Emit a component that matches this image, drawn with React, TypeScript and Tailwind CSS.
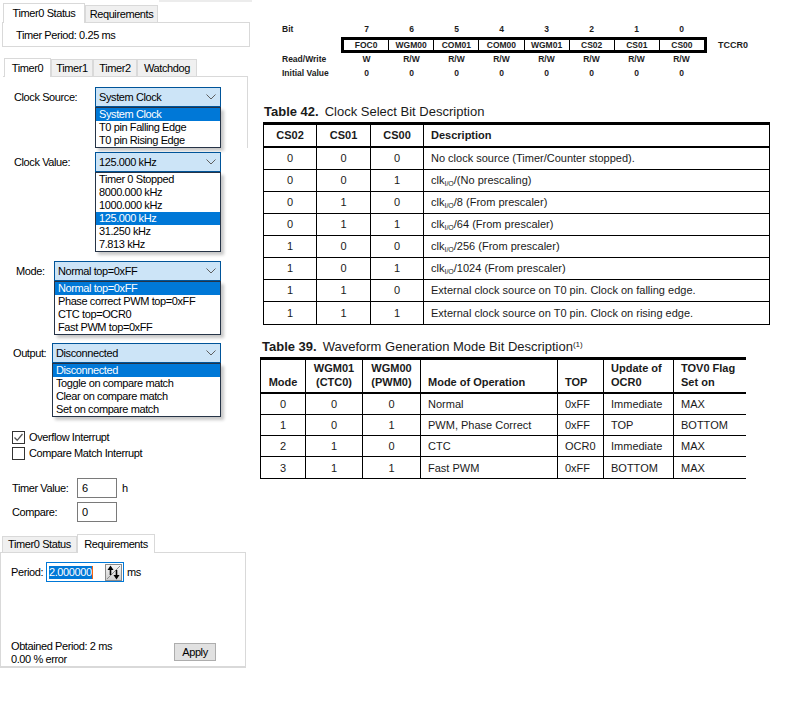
import React from 'react';

// Composite: WinForms timer-config panel on the left, datasheet excerpts on the right.

type TabProps = { label: string; active?: boolean; className: string };

function Tab({ label, active, className }: TabProps) {
  if (active) {
    return (
      <div
        className={`relative z-10 -mb-px flex items-center justify-center border border-b-0 border-[#d9d9d9] bg-white ${className}`}
      >
        {label}
      </div>
    );
  }
  return (
    <div
      className={`flex items-center justify-center border border-b-0 border-[#d9d9d9] bg-[#f0f0f0] ${className}`}
    >
      {label}
    </div>
  );
}

function Chevron() {
  return (
    <svg width="10" height="6" viewBox="0 0 10 6" className="shrink-0">
      <path d="M0.5 0.5 L5 5 L9.5 0.5" fill="none" stroke="#5f5f5f" strokeWidth="1" />
    </svg>
  );
}

type FieldProps = {
  label: string;
  labelCls: string;
  boxCls: string;
  value: string;
  options: string[];
  selected: number;
  className?: string;
};

function ComboField({ label, labelCls, boxCls, value, options, selected, className }: FieldProps) {
  return (
    <div className={`flex ${className ?? ''}`}>
      <div className={`leading-[20px] ${labelCls}`}>{label}</div>
      <div className={boxCls}>
        <div className="flex h-[20px] items-center justify-between border border-[#005499] bg-[#cce4f7] pl-[3px] pr-[4px]">
          <span>{value}</span>
          <Chevron />
        </div>
        <div className="border border-[#263447] bg-white shadow-[3px_3px_3px_rgba(0,0,0,0.22)]">
          {options.map((o, i) => (
            <div
              key={o}
              className={`h-[13px] pl-[3px] leading-[13px] ${i === selected ? 'bg-[#0078d7] text-white' : ''}`}
            >
              {o}
            </div>
          ))}
        </div>
      </div>
    </div>
  );
}

function CheckBox({ checked, label }: { checked?: boolean; label: string }) {
  return (
    <div className="flex h-[16px] items-center pl-[9px]">
      <div className="flex h-[13px] w-[13px] items-center justify-center border border-[#333] bg-white">
        {checked && (
          <svg width="11" height="11" viewBox="0 0 11 11">
            <path d="M1.5 5.5 L4.2 8.3 L9.5 2" fill="none" stroke="#555" strokeWidth="1.3" />
          </svg>
        )}
      </div>
      <span className="ml-[4px]">{label}</span>
    </div>
  );
}

function SpinIcon() {
  return (
    <div className="flex h-[17px] w-[17px] items-center justify-center border border-[#8a8a8a] bg-gradient-to-b from-[#f6f6f6] to-[#cfcfcf]">
      <svg width="15" height="15" viewBox="0 0 15 15">
        <path d="M1 14 L14 1" stroke="#8c8c8c" strokeWidth="1" />
        <path d="M4.5 10 V3" stroke="#000" strokeWidth="1.6" />
        <path d="M1.5 5 L4.5 0.5 L7.5 5 Z" fill="#000" />
        <path d="M10.5 5 V12" stroke="#000" strokeWidth="1.6" />
        <path d="M7.5 10 L10.5 14.5 L13.5 10 Z" fill="#000" />
      </svg>
    </div>
  );
}

function LeftPanel() {
  return (
    <div className="w-[252px] shrink-0 text-[11px] leading-[13px] tracking-[-0.4px] text-black">
      {/* status tab control */}
      <div className="flex h-[22px] items-end pl-[3px]">
        <Tab label="Timer0 Status" active className="h-[20px] w-[82px]" />
        <Tab label="Requirements" className="h-[17px] w-[73px]" />
        <div className="ml-[1px] h-[2px] flex-1 self-start bg-[#ececec]" />
      </div>
      <div className="ml-[2px] flex h-[25px] w-[248px] items-center border border-[#d9d9d9] pl-[13px] pt-[2px]">
        Timer Period: 0.25 ms
      </div>

      {/* timer tabs */}
      <div className="mt-[10px] flex h-[19px] items-end pl-[4px]">
        <Tab label="Timer0" active className="h-[19px] w-[47px]" />
        <Tab label="Timer1" className="h-[17px] w-[42px]" />
        <Tab label="Timer2" className="h-[17px] w-[44px]" />
        <Tab label="Watchdog" className="h-[17px] w-[60px]" />
      </div>
      <div className="ml-[3px] w-[245px] border-t border-[#d9d9d9]">
        <div className="border-r border-[#d9d9d9] pt-[10px]">
          <ComboField
            label="Clock Source:"
            labelCls="w-[92px] pl-[11px]"
            boxCls="w-[126px]"
            value="System Clock"
            options={['System Clock', 'T0 pin Falling Edge', 'T0 pin Rising Edge']}
            selected={0}
          />
        </div>
        <ComboField
          className="mt-[4px]"
          label="Clock Value:"
          labelCls="w-[92px] pl-[11px]"
          boxCls="w-[126px]"
          value="125.000 kHz"
          options={['Timer 0 Stopped', '8000.000 kHz', '1000.000 kHz', '125.000 kHz', '31.250 kHz', '7.813 kHz']}
          selected={3}
        />
        <ComboField
          className="mt-[9px]"
          label="Mode:"
          labelCls="w-[51px] pl-[13px]"
          boxCls="w-[167px]"
          value="Normal top=0xFF"
          options={['Normal top=0xFF', 'Phase correct PWM top=0xFF', 'CTC top=OCR0', 'Fast PWM top=0xFF']}
          selected={0}
        />
        <ComboField
          className="mt-[8px]"
          label="Output:"
          labelCls="w-[49px] pl-[10px]"
          boxCls="w-[169px]"
          value="Disconnected"
          options={['Disconnected', 'Toggle on compare match', 'Clear on compare match', 'Set on compare match']}
          selected={0}
        />

        <div className="mt-[12px]">
          <CheckBox checked label="Overflow Interrupt" />
          <CheckBox label="Compare Match Interrupt" />
        </div>

        <div className="mt-[17px] flex h-[20px] items-center">
          <div className="w-[74px] pl-[9px]">Timer Value:</div>
          <div className="flex h-[20px] w-[40px] items-center border border-[#7a7a7a] pl-[4px]">6</div>
          <span className="ml-[5px]">h</span>
        </div>
        <div className="mt-[4px] flex h-[20px] items-center">
          <div className="w-[74px] pl-[9px]">Compare:</div>
          <div className="flex h-[20px] w-[40px] items-center border border-[#7a7a7a] pl-[4px]">0</div>
        </div>
      </div>

      {/* requirements tab control */}
      <div className="mt-[11px] flex h-[19px] items-end pl-[2px]">
        <Tab label="Timer0 Status" className="h-[16px] w-[75px]" />
        <Tab label="Requirements" active className="h-[19px] w-[78px]" />
      </div>
      <div className="flex h-[116px] w-[246px] flex-col border border-b-2 border-[#d9d9d9]">
        <div className="mt-[9px] flex h-[20px] items-center">
          <div className="w-[45px] pl-[10px]">Period:</div>
          <div className="flex h-[20px] w-[78px] items-center border border-[#0078d7] pl-[2px] pr-[1px]">
            <span className="bg-[#0078d7] text-white">2.000000</span>
            <span className="h-[13px] w-px bg-[#f7630c]" />
            <div className="ml-auto">
              <SpinIcon />
            </div>
          </div>
          <span className="ml-[3px]">ms</span>
        </div>
        <div className="mt-auto flex items-start pl-[10px]">
          <div className="w-[163px]">
            <div>Obtained Period: 2 ms</div>
            <div>0.00 % error</div>
          </div>
          <div className="mt-[3px] flex h-[18px] w-[42px] items-center justify-center border border-[#adadad] bg-[#e1e1e1]">
            Apply
          </div>
        </div>
      </div>
    </div>
  );
}

const bitNames = ['FOC0', 'WGM00', 'COM01', 'COM00', 'WGM01', 'CS02', 'CS01', 'CS00'];

function RegisterRow({ label, cells }: { label: string; cells: string[] }) {
  return (
    <div className="flex h-[10px]">
      <div className="w-[59px]">{label}</div>
      <div className="flex w-[366px] px-[3px]">
        {cells.map((c, i) => (
          <div key={i} className="flex-1 text-center">
            {c}
          </div>
        ))}
      </div>
    </div>
  );
}

function Register() {
  return (
    <div className="ml-[30px] mt-[24px] text-[8.5px] font-bold leading-[10px] tracking-normal text-[#1c1c1c]">
      <RegisterRow label="Bit" cells={['7', '6', '5', '4', '3', '2', '1', '0']} />
      <div className="mt-[3px] flex items-center">
        <div className="w-[59px]" />
        <div className="flex h-[16px] w-[366px] border-[3px] border-black">
          {bitNames.map((b, i) => (
            <div
              key={b}
              className={`flex flex-1 items-center justify-center ${i < 7 ? 'border-r border-black' : ''}`}
            >
              {b}
            </div>
          ))}
        </div>
        <div className="ml-[11px] text-[9px]">TCCR0</div>
      </div>
      <div className="mt-[1px]">
        <RegisterRow label="Read/Write" cells={['W', 'R/W', 'R/W', 'R/W', 'R/W', 'R/W', 'R/W', 'R/W']} />
      </div>
      <div className="mt-[4px]">
        <RegisterRow label="Initial Value" cells={['0', '0', '0', '0', '0', '0', '0', '0']} />
      </div>
    </div>
  );
}

const clk = (rest: string) => (
  <>
    clk<sub className="text-[7px]">I/O</sub>
    {rest}
  </>
);

const clockRows: [string, string, string, React.ReactNode][] = [
  ['0', '0', '0', 'No clock source (Timer/Counter stopped).'],
  ['0', '0', '1', clk('/(No prescaling)')],
  ['0', '1', '0', clk('/8 (From prescaler)')],
  ['0', '1', '1', clk('/64 (From prescaler)')],
  ['1', '0', '0', clk('/256 (From prescaler)')],
  ['1', '0', '1', clk('/1024 (From prescaler)')],
  ['1', '1', '0', 'External clock source on T0 pin. Clock on falling edge.'],
  ['1', '1', '1', 'External clock source on T0 pin. Clock on rising edge.'],
];

function ClockTable() {
  return (
    <div>
      <div className="ml-[12px] mt-[26px] text-[13px] leading-[15px]">
        <span className="font-bold">Table 42.</span>
        <span className="ml-[6px]">Clock Select Bit Description</span>
      </div>
      <div className="ml-[11px] mt-[3px] w-[507px] border-x border-b border-t-[3px] border-black text-[11px] leading-[13px]">
        <div className="flex h-[23px] border-b-2 border-black font-bold">
          <div className="flex w-[53px] items-center justify-center border-r border-black">CS02</div>
          <div className="flex w-[54px] items-center justify-center border-r border-black">CS01</div>
          <div className="flex w-[53px] items-center justify-center border-r border-black">CS00</div>
          <div className="flex flex-1 items-center pl-[7px]">Description</div>
        </div>
        {clockRows.map((r, i) => (
          <div key={i} className={`flex h-[22px] ${i < 7 ? 'border-b border-black' : ''}`}>
            <div className="flex w-[53px] items-center justify-center border-r border-black">{r[0]}</div>
            <div className="flex w-[54px] items-center justify-center border-r border-black">{r[1]}</div>
            <div className="flex w-[53px] items-center justify-center border-r border-black">{r[2]}</div>
            <div className="flex flex-1 items-center pl-[7px]">
              <span>{r[3]}</span>
            </div>
          </div>
        ))}
      </div>
    </div>
  );
}

const modeRows = [
  ['0', '0', '0', 'Normal', '0xFF', 'Immediate', 'MAX'],
  ['1', '0', '1', 'PWM, Phase Correct', '0xFF', 'TOP', 'BOTTOM'],
  ['2', '1', '0', 'CTC', 'OCR0', 'Immediate', 'MAX'],
  ['3', '1', '1', 'Fast PWM', '0xFF', 'BOTTOM', 'MAX'],
];

function ModeTable() {
  const head = 'flex flex-col justify-end pb-[3px] border-r border-black';
  return (
    <div>
      <div className="ml-[10px] mt-[14px] text-[13px] leading-[15px]">
        <span className="font-bold">Table 39.</span>
        <span className="ml-[6px]">Waveform Generation Mode Bit Description</span>
        <sup className="text-[8px]">(1)</sup>
      </div>
      <div className="ml-[8px] mt-[3px] w-[486px] border-b border-l border-t-[3px] border-black text-[11px] leading-[14px]">
        <div className="flex h-[34px] border-b-2 border-black font-bold">
          <div className={`${head} w-[45px] items-center`}>Mode</div>
          <div className={`${head} w-[57px] items-center`}>
            <span>WGM01</span>
            <span>(CTC0)</span>
          </div>
          <div className={`${head} w-[58px] items-center`}>
            <span>WGM00</span>
            <span>(PWM0)</span>
          </div>
          <div className={`${head} w-[137px] pl-[7px]`}>Mode of Operation</div>
          <div className={`${head} w-[46px] pl-[7px]`}>TOP</div>
          <div className={`${head} w-[70px] pl-[7px]`}>
            <span>Update of</span>
            <span>OCR0</span>
          </div>
          <div className="flex flex-1 flex-col justify-end pb-[3px] pl-[7px]">
            <span>TOV0 Flag</span>
            <span>Set on</span>
          </div>
        </div>
        {modeRows.map((r, i) => (
          <div key={i} className={`flex h-[21px] ${i < 3 ? 'border-b border-black' : ''}`}>
            <div className="flex w-[45px] items-center justify-center border-r border-black">{r[0]}</div>
            <div className="flex w-[57px] items-center justify-center border-r border-black">{r[1]}</div>
            <div className="flex w-[58px] items-center justify-center border-r border-black">{r[2]}</div>
            <div className="flex w-[137px] items-center border-r border-black pl-[7px]">{r[3]}</div>
            <div className="flex w-[46px] items-center border-r border-black pl-[7px]">{r[4]}</div>
            <div className="flex w-[70px] items-center border-r border-black pl-[7px]">{r[5]}</div>
            <div className="flex flex-1 items-center pl-[7px]">{r[6]}</div>
          </div>
        ))}
      </div>
    </div>
  );
}

export default function App() {
  return (
    <div className="flex h-[716px] w-[793px] overflow-hidden bg-white font-['Liberation_Sans',Arial,sans-serif]">
      <LeftPanel />
      <div className="flex-1 text-[#1a1a1a]">
        <Register />
        <ClockTable />
        <ModeTable />
      </div>
    </div>
  );
}
